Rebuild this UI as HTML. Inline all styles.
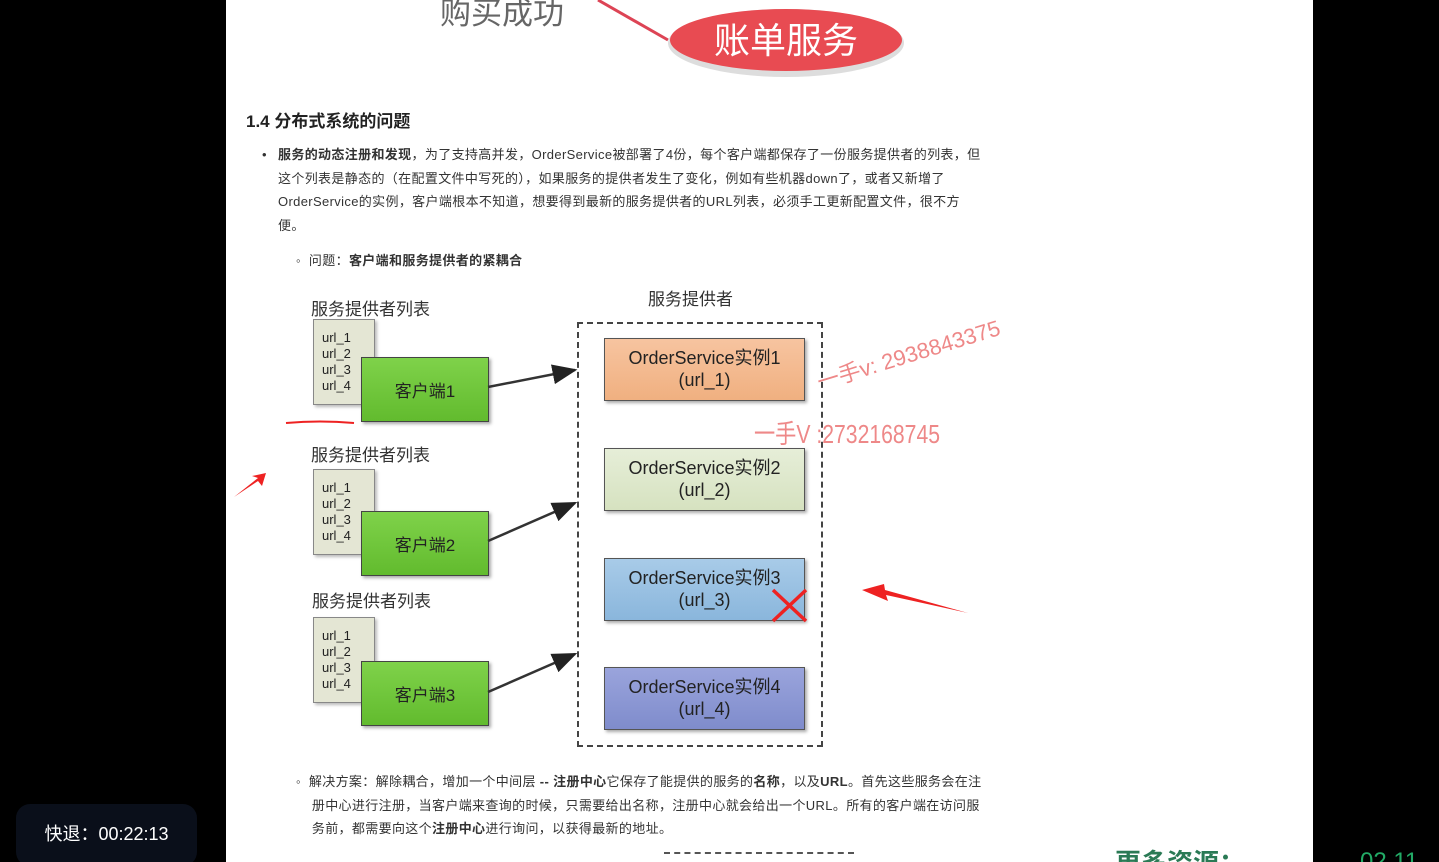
<!DOCTYPE html>
<html><head><meta charset="utf-8"><style>
html,body{margin:0;width:1439px;height:862px;overflow:hidden}
body{background:#000;position:relative;font-family:"Liberation Sans","Noto Sans CJK SC",sans-serif}
.page{position:absolute;left:226px;top:0;width:1087px;height:862px;background:#fff}
.a{position:absolute;white-space:nowrap}
.p{font-size:13px;color:#333;line-height:23.5px;letter-spacing:0.35px}
.lst{position:absolute;width:62px;height:86px;background:#e4e6d4;border:1px solid #888;box-shadow:2px 2px 3px #bbb;font-size:13px;line-height:16px;padding:10px 0 0 8px;box-sizing:border-box;color:#222}
.cl{position:absolute;width:126px;height:63px;background:linear-gradient(#7fd24a,#62bb2e);border:1px solid #444;box-shadow:2px 2px 3px #aaa;font-size:17px;display:flex;align-items:center;justify-content:center;color:#222}
.sv{position:absolute;left:604px;width:201px;height:63px;border:1px solid #555;box-shadow:2px 2px 3px #aaa;font-size:18px;text-align:center;line-height:22px;padding-top:8px;box-sizing:border-box;color:#222}
.lt{font-size:17px;color:#333}
</style></head><body>
<div class="page"></div>
<div class="a" style="left:440px;top:-12px;font-size:31px;color:#666">购买成功</div>
<svg class="a" style="left:590px;top:0" width="330" height="90"><line x1="8" y1="0" x2="78" y2="40" stroke="#d45" stroke-width="3"/><ellipse cx="196" cy="43" rx="118" ry="34" fill="#ddd"/><ellipse cx="196" cy="40" rx="116" ry="31" fill="#e84b52"/><text x="196" y="53" font-size="36" fill="#fff" text-anchor="middle" font-family="Noto Sans CJK SC">账单服务</text></svg>
<div class="a" style="left:246px;top:107px;font-size:17px;font-weight:bold;color:#222">1.4 分布式系统的问题</div>
<div class="a p" style="left:262px;top:143px">•</div>
<div class="a p" style="left:278px;top:143px"><b>服务的动态注册和发现</b>，为了支持高并发，OrderService被部署了4份，每个客户端都保存了一份服务提供者的列表，但<br>这个列表是静态的（在配置文件中写死的），如果服务的提供者发生了变化，例如有些机器down了，或者又新增了<br>OrderService的实例，客户端根本不知道，想要得到最新的服务提供者的URL列表，必须手工更新配置文件，很不方<br>便。</div>
<div class="a p" style="left:296px;top:249px">◦&nbsp; 问题：<b>客户端和服务提供者的紧耦合</b></div>
<div class="a lt" style="left:648px;top:285px">服务提供者</div>
<div class="a lt" style="left:311px;top:295px">服务提供者列表</div>
<div class="a lt" style="left:311px;top:441px">服务提供者列表</div>
<div class="a lt" style="left:312px;top:587px">服务提供者列表</div>
<div class="lst" style="left:313px;top:319px">url_1<br>url_2<br>url_3<br>url_4</div>
<div class="cl" style="left:361px;top:357px">客户端1</div>
<div class="lst" style="left:313px;top:469px">url_1<br>url_2<br>url_3<br>url_4</div>
<div class="cl" style="left:361px;top:511px">客户端2</div>
<div class="lst" style="left:313px;top:617px">url_1<br>url_2<br>url_3<br>url_4</div>
<div class="cl" style="left:361px;top:661px">客户端3</div>
<div class="a" style="left:577px;top:322px;width:242px;height:421px;border:2px dashed #444"></div>
<div class="sv" style="left:604px;top:338px;background:linear-gradient(#f7c4a0,#f0b080)">OrderService实例1<br>(url_1)</div>
<div class="sv" style="top:448px;background:linear-gradient(#e6eed8,#d6e2c0)">OrderService实例2<br>(url_2)</div>
<div class="sv" style="top:558px;background:linear-gradient(#a8cbe8,#8ab6dc)">OrderService实例3<br>(url_3)</div>
<div class="sv" style="top:667px;background:linear-gradient(#9aa4dc,#7f8ccc)">OrderService实例4<br>(url_4)</div>
<svg class="a" style="left:0;top:0" width="1439" height="862">
<defs><marker id="m" markerWidth="10" markerHeight="8" refX="9" refY="4" orient="auto"><path d="M0,0L10,4L0,8z" fill="#222"/></marker></defs>
<g stroke="#333" stroke-width="2.5" marker-end="url(#m)"><line x1="488" y1="387" x2="575" y2="370"/><line x1="488" y1="541" x2="575" y2="503"/><line x1="488" y1="692" x2="575" y2="654"/></g>
<g stroke="#e22" stroke-width="3.5"><line x1="773" y1="590" x2="806" y2="621"/><line x1="806" y1="590" x2="773" y2="621"/></g>
<path d="M286 423 Q320 420 354 423" stroke="#e22" stroke-width="2" fill="none"/>
<path d="M234 497 L258 478 L252 476 L266 473 L262 486 L258 481 Z" fill="#e22"/>
<path d="M968 613 L886 595 L888 601 L862 590 L884 584 L885 590 Z" fill="#e22"/>
<text x="820" y="390" font-size="22" fill="#e88" textLength="190" transform="rotate(-17 820 390)" font-family="Liberation Sans,Noto Sans CJK SC">一手v: 2938843375</text>
<text x="754" y="443" font-size="26" fill="#e88" textLength="186" lengthAdjust="spacingAndGlyphs" font-family="Liberation Sans,Noto Sans CJK SC">一手V :2732168745</text>
</svg>
<div class="a p" style="left:296px;top:770px">◦&nbsp; 解决方案：解除耦合，增加一个中间层 <b>-- 注册中心</b>它保存了能提供的服务的<b>名称</b>，以及<b>URL</b>。首先这些服务会在注<br>&nbsp;&nbsp;&nbsp;&nbsp;册中心进行注册，当客户端来查询的时候，只需要给出名称，注册中心就会给出一个URL。所有的客户端在访问服<br>&nbsp;&nbsp;&nbsp;&nbsp;务前，都需要向这个<b>注册中心</b>进行询问，以获得最新的地址。</div>
<div class="a" style="left:664px;top:852px;width:190px;height:10px;border-top:2px dashed #555"></div>
<div class="a" style="left:1115px;top:843px;font-size:26px;font-weight:bold;color:#2a7a55">更多资源：</div>
<div class="a" style="left:1360px;top:848px;font-size:24px;color:#2a6">02 11</div>
<div class="a" style="left:16px;top:804px;width:181px;height:62px;background:#0a0f1a;border-radius:14px;color:#fff;font-size:18px;line-height:60px;text-align:center">快退：00:22:13</div>
</body></html>
